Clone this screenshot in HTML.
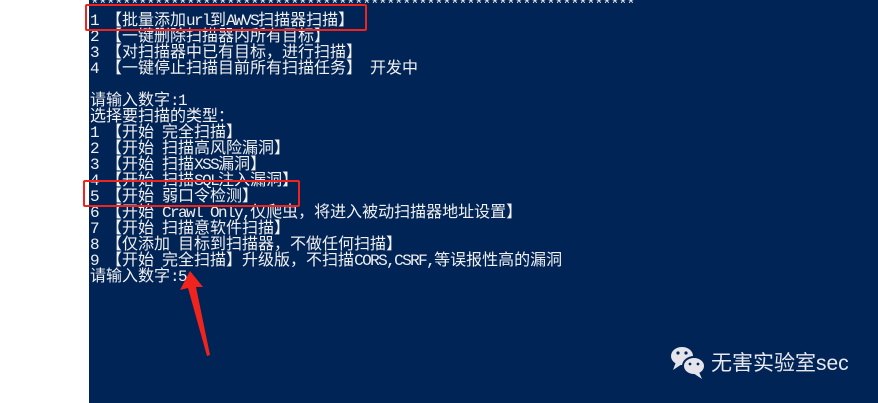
<!DOCTYPE html>
<html><head><meta charset="utf-8"><style>
html,body{margin:0;padding:0}
body{width:878px;height:403px;position:relative;overflow:hidden;background:#fff}
#c{position:absolute;left:89px;top:0;width:789px;height:403px;background:#012456}
.l{position:absolute;left:90px;height:16px;line-height:16px;white-space:pre;color:#f0f0f0;font-family:"Noto Sans CJK SC","WenQuanYi Zen Hei",sans-serif;font-size:16px}
.a{font-family:"Liberation Mono",monospace;font-size:16px;letter-spacing:-1.6px}
.box{position:absolute;border:2px solid #f0241c;border-radius:2px}
</style></head><body>
<div id="c"></div>
<div class="l" style="top:-6px"><span class="a">********************************************************************</span></div>
<div class="l" style="top:10px"><span class="a">1 </span>【批量添加<span class="a">url</span>到<span class="a">AWVS</span>扫描器扫描】</div>
<div class="l" style="top:26px"><span class="a">2 </span>【一键删除扫描器内所有目标】</div>
<div class="l" style="top:42px"><span class="a">3 </span>【对扫描器中已有目标，进行扫描】</div>
<div class="l" style="top:58px"><span class="a">4 </span>【一键停止扫描目前所有扫描任务】<span class="a"> </span>开发中</div>
<div class="l" style="top:90px">请输入数字<span class="a">:1</span></div>
<div class="l" style="top:106px">选择要扫描的类型：</div>
<div class="l" style="top:122px"><span class="a">1 </span>【开始<span class="a"> </span>完全扫描】</div>
<div class="l" style="top:138px"><span class="a">2 </span>【开始<span class="a"> </span>扫描高风险漏洞】</div>
<div class="l" style="top:154px"><span class="a">3 </span>【开始<span class="a"> </span>扫描<span class="a">XSS</span>漏洞】</div>
<div class="l" style="top:170px"><span class="a">4 </span>【开始<span class="a"> </span>扫描<span class="a">SQL</span>注入漏洞】</div>
<div class="l" style="top:186px"><span class="a">5 </span>【开始<span class="a"> </span>弱口令检测】</div>
<div class="l" style="top:202px"><span class="a">6 </span>【开始<span class="a"> Crawl Only,</span>仅爬虫，将进入被动扫描器地址设置】</div>
<div class="l" style="top:218px"><span class="a">7 </span>【开始<span class="a"> </span>扫描意软件扫描】</div>
<div class="l" style="top:234px"><span class="a">8 </span>【仅添加<span class="a"> </span>目标到扫描器，不做任何扫描】</div>
<div class="l" style="top:250px"><span class="a">9 </span>【开始<span class="a"> </span>完全扫描】升级版，不扫描<span class="a">CORS,CSRF,</span>等误报性高的漏洞</div>
<div class="l" style="top:266px">请输入数字<span class="a">:5</span></div>
<div class="box" style="left:85px;top:4px;width:278px;height:23px"></div>
<div class="box" style="left:83px;top:180px;width:213px;height:23px"></div>
<svg style="position:absolute;left:0;top:0" width="878" height="403">
<polygon points="190,271 180,290 188,288 207,356 210,355 196,287 203,287" fill="#f0241c"/>
<g fill="#e4e4ea">
<ellipse cx="682" cy="356" rx="11" ry="9"/><polygon points="676,362 673,370 682,364"/>
<ellipse cx="694" cy="366" rx="11" ry="9" stroke="#012456" stroke-width="2"/><polygon points="699,372 702,379 693,373"/>
</g>
<g fill="#012456"><circle cx="678" cy="353" r="1.6"/><circle cx="686" cy="353" r="1.6"/><circle cx="690" cy="364" r="1.4"/><circle cx="698" cy="364" r="1.4"/></g>
</svg>
<div style="position:absolute;left:711px;top:351px;font-family:'Liberation Sans','Noto Sans CJK SC',sans-serif;font-size:21px;line-height:26px;color:#e8e8ee">无害实验室sec</div>
</body></html>
